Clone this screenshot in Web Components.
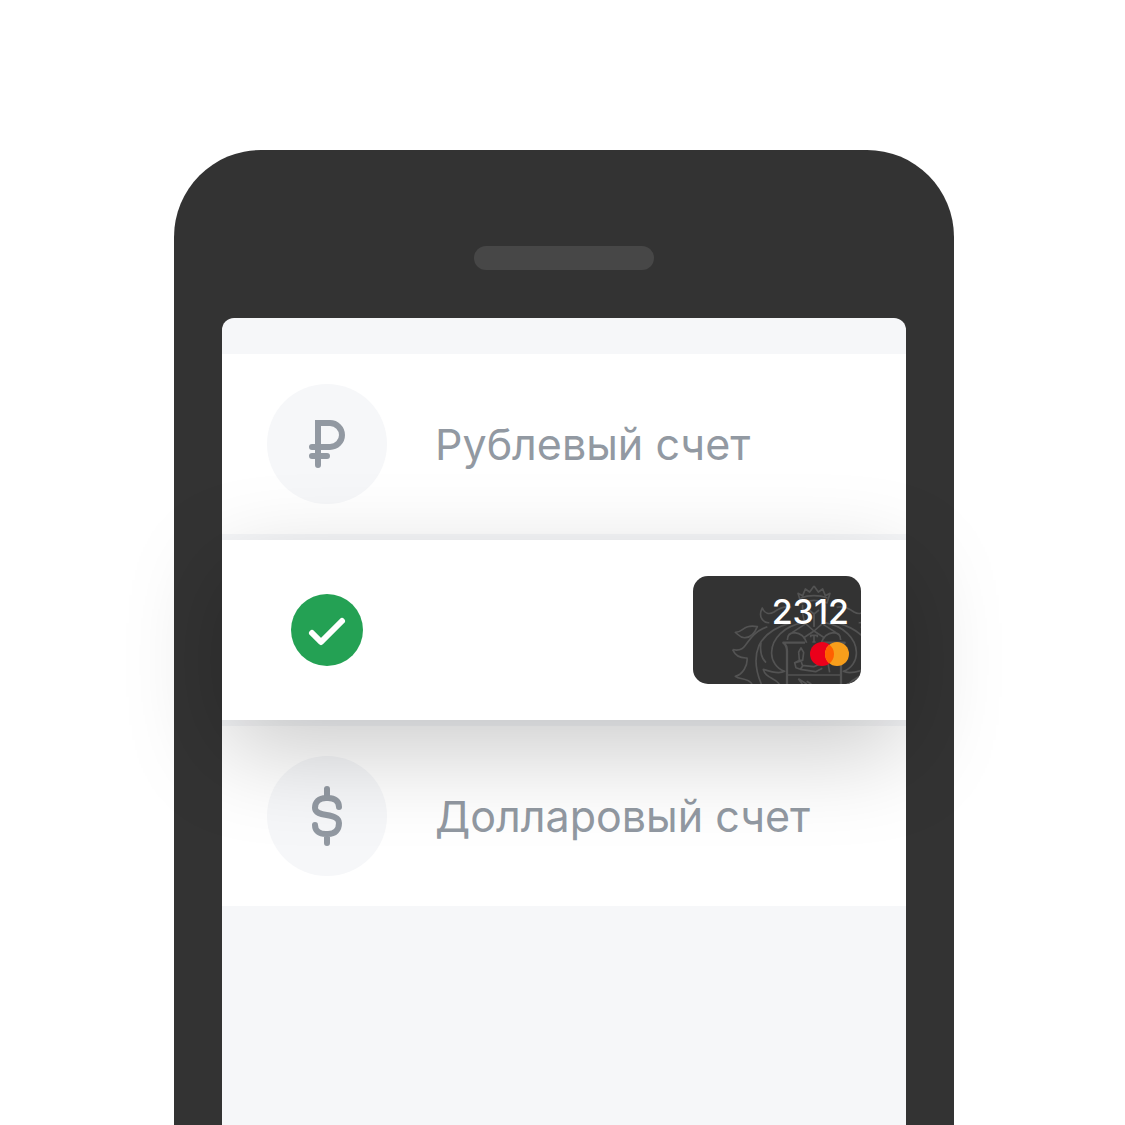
<!DOCTYPE html>
<html lang="ru">
<head>
<meta charset="utf-8">
<meta name="viewport" content="width=device-width, initial-scale=1">
<title>Выбор счета</title>
<style>
  body { margin: 0; background: #fff; font-family: Inter, "Liberation Sans", sans-serif; }
</style>
</head>
<body>
<phone-frame>
  <account-list>
    <account-row>
      <currency-icon slot="icon" kind="rub"></currency-icon>Рублевый счет
    </account-row>
    <account-row selected label="Карта">
      <check-mark slot="icon"></check-mark>
      <bank-card slot="end">2312</bank-card>
    </account-row>
    <account-row>
      <currency-icon slot="icon" kind="usd"></currency-icon>Долларовый счет
    </account-row>
  </account-list>
</phone-frame>

<script>
class BaseElement extends HTMLElement {
  connectedCallback() {
    if (!this.shadowRoot) this.attachShadow({ mode: 'open' }).innerHTML = this.view();
  }
}

customElements.define('phone-frame', class extends BaseElement {
  view() {
    return `<style>
      :host { display: flex; box-sizing: border-box; min-height: 100vh; padding: 150px 171px 0 174px; overflow: hidden; }
      .body { flex: 1; min-width: 0; display: flex; flex-direction: column; align-items: center; box-sizing: border-box;
              padding: 96px 48px 0; background: #333; border-radius: 87px 87px 0 0; }
      .speaker { width: 180px; height: 24px; border-radius: 12px; background: #474747; }
      .screen { flex: 1; align-self: stretch; margin-top: 48px; padding-top: 36px; background: #f6f7f9; border-radius: 12px 12px 0 0; }
    </style>
    <div class="body"><div class="speaker"></div><main class="screen"><slot></slot></main></div>`;
  }
});

customElements.define('account-list', class extends BaseElement {
  view() {
    return `<style>:host { display: flex; flex-direction: column; gap: 6px; }</style><slot></slot>`;
  }
});

customElements.define('account-row', class extends BaseElement {
  view() {
    const label = this.getAttribute('label');
    return `<style>
      :host { display: block; }
      :host([selected]) { position: relative; z-index: 1; box-shadow: 0 30px 96px rgba(0, 0, 0, .21); }
      button { display: flex; align-items: center; gap: 48px; width: 100%; height: 180px; margin: 0; padding: 0 45px;
               border: 0; background: #fff; color: #9299a2; font: inherit; font-size: 43px; line-height: 54px; text-align: left; }
      .icon { display: flex; justify-content: center; flex: none; width: 120px; }
      .text { flex: 1; white-space: nowrap; }
    </style>
    <button type="button"${label ? ` aria-label="${label}" aria-pressed="true"` : ''}>
      <span class="icon"><slot name="icon"></slot></span>
      <span class="text"><slot></slot></span>
      <slot name="end"></slot>
    </button>`;
  }
});

customElements.define('currency-icon', class extends BaseElement {
  view() {
    const shapes = {
      rub: '<path d="M51 81V39H63A12 12 0 0 1 63 63H45M45 72H60"/>',
      usd: '<path d="M60 33V41M60 79V87M72 51C72 45 68 42 61 42H59C52 42 48 46 48 52C48 62 72 56 72 67C72 74 68 78 61 78H59C52 78 48 75 48 69"/>'
    };
    return `<style>
      :host { display: block; width: 120px; height: 120px; border-radius: 50%; background: #f6f7f9; }
      svg { display: block; fill: none; stroke: #9299a2; stroke-width: 6; stroke-linecap: round; }
    </style><svg viewBox="0 0 120 120" aria-hidden="true">${shapes[this.getAttribute('kind')]}</svg>`;
  }
});

customElements.define('check-mark', class extends BaseElement {
  view() {
    return `<style>
      :host { display: block; width: 72px; height: 72px; border-radius: 50%; background: #24a154; }
      svg { display: block; fill: none; stroke: #fff; stroke-width: 6; stroke-linecap: round; stroke-linejoin: round; }
    </style><svg viewBox="0 0 72 72" aria-hidden="true"><path d="M21 39L30 48L51 27"/></svg>`;
  }
});

customElements.define('bank-card', class extends BaseElement {
  view() {
    return `<style>
      :host { display: flex; flex-direction: column; align-items: flex-end; gap: 12px; box-sizing: border-box; position: relative;
              width: 168px; height: 108px; padding: 18px 12px; border-radius: 15px; overflow: hidden; background: #333;
              color: #fff; font-size: 34px; line-height: 36px; font-weight: 500; }
      .crest { position: absolute; inset: 0; fill: none; stroke: #535353; stroke-width: 5; stroke-linejoin: round; }
      .number, .logo { display: block; position: relative; }
    </style>
    <svg class="crest" viewBox="9 18 504 324" aria-hidden="true">
      <defs><g id="half">
        <path d="M372 48L359 66L346 57L338 77L324 70L333 99Q350 91 372 91M332 84Q350 77 372 77"/>
        <path d="M338 104Q336 140 346 160L372 183M357 120L372 132V170M349 160L306 188M372 183L340 204"/>
        <path d="M292 210C292 196 300 188 314 188C332 190 344 200 350 218"/>
        <path d="M345 218H280C289 224 291 232 291 244V342" stroke-width="7"/>
        <path d="M291 315H372"/>
        <path d="M136 187C160 188 158 162 202 170C194 190 184 202 166 203C150 205 144 192 136 187Z"/>
        <path d="M238 158C222 160 202 142 217 114C224 132 238 134 252 126C270 113 286 108 304 112"/>
        <path d="M128 239C178 250 160 196 232 170"/>
        <path d="M128 239C137 260 151 265 171 264C174 286 158 314 136 319C149 330 174 322 186 342"/>
        <path d="M304 158C254 172 222 196 207 226C192 262 197 302 214 342M213 218C209 244 214 264 228 278"/>
        <path d="M340 158C282 168 246 206 245 246C243 273 262 297 284 304C265 314 238 304 220 298C226 324 252 322 268 342"/>
      </g></defs>
      <use href="#half"/><use href="#half" transform="translate(744 0) scale(-1 1)"/>
      <path d="M362 202V196H382V202M372 196V216M367 216H377"/>
      <path d="M333 234L326 246L328 271H338L341 247ZM316 278L336 272M326 272L314 278L318 293L331 298L338 288L334 276M336 286L371 290L392 281L414 280L419 307M331 298L377 305L397 295M325 326L350 342M325 326L337 342M350 334L364 342"/>
    </svg>
    <span class="number"><slot></slot></span>
    <svg class="logo" width="39" height="24" viewBox="0 0 39 24" aria-hidden="true">
      <circle cx="12" cy="12" r="12" fill="#eb001b"/><circle cx="27" cy="12" r="12" fill="#f79e1b"/>
      <path d="M19.500 2.630A12 12 0 0 1 19.500 21.370A12 12 0 0 1 19.500 2.630Z" fill="#ff5f00"/>
    </svg>`;
  }
});
</script>
</body>
</html>
